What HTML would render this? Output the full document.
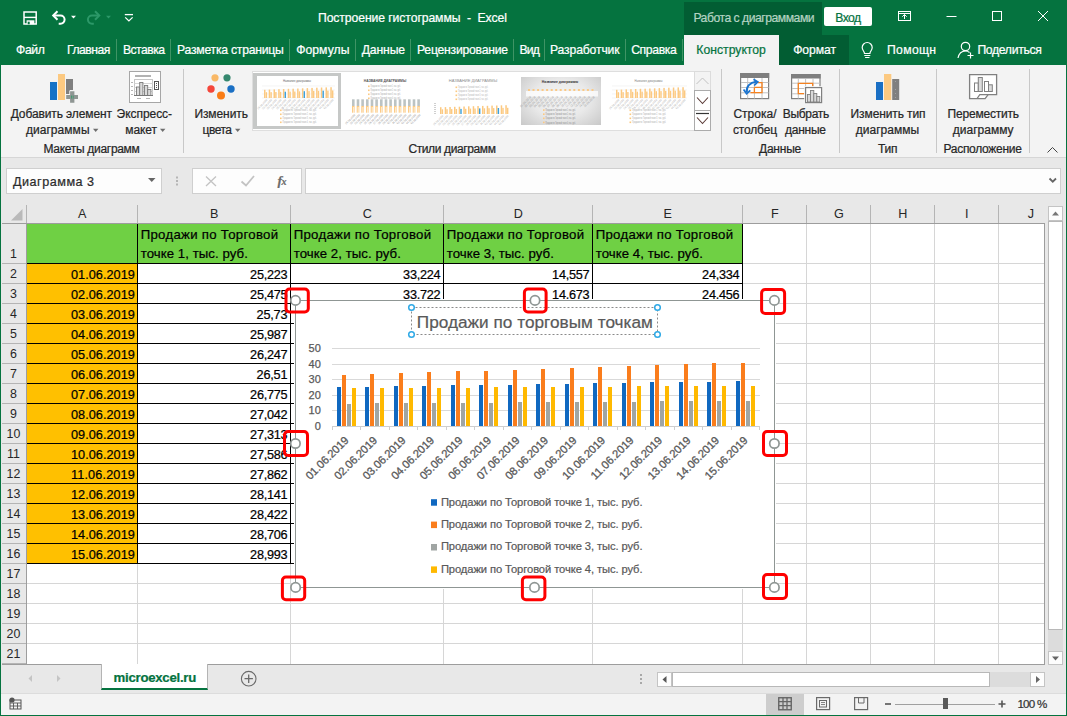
<!DOCTYPE html><html lang="ru"><head><meta charset="utf-8"><title>Построение гистограммы - Excel</title><style>
*{box-sizing:border-box;margin:0;padding:0}
html,body{width:1067px;height:716px;overflow:hidden;background:#fff}
body{font-family:"Liberation Sans",sans-serif;font-size:12px;color:#262626;position:relative}
.a{position:absolute}
.t{position:absolute;white-space:nowrap;line-height:1;-webkit-text-stroke:.22px currentColor}
.w{color:#fff}
svg{position:absolute;overflow:visible}
#title{left:0;top:0;width:1067px;height:65px;background:#05733f}
#ribbon{left:1px;top:65px;width:1065px;height:92px;background:#f3f3f3}
#fbar{left:1px;top:157px;width:1065px;height:47px;background:#e8e8e8;border-top:1px solid #d6d6d6}
.sep{position:absolute;width:1px;background:#c8c8c8}
.tsep{position:absolute;width:1px;background:#3f9465;top:39px;height:22px}
.box{position:absolute;background:#fdfdfd;border:1px solid #cfcfcf}
.gl{position:absolute;background:#d6d6d6}
.bl{position:absolute;background:#000}
</style></head><body>
<div id="title" class="a"></div>
<div class="a" style="left:684px;top:2px;width:138px;height:33px;background:#025d33"></div>
<div class="a" style="left:779px;top:35px;width:70px;height:30px;background:#025d33"></div>
<div class="a" style="left:684px;top:35px;width:95px;height:30px;background:#f3f3f3"></div>
<div class="t " style="left:318px;top:11.7px;font-size:12.2px;letter-spacing:-0.09px;color:#fff;white-space:pre;">Построение гистограммы  -  Excel</div>
<div class="t " style="left:693.4px;top:11.7px;font-size:12.2px;letter-spacing:-0.49px;color:#b4d3c2;">Работа с диаграммами</div>
<div class="a" style="left:824px;top:7px;width:48px;height:19px;background:#fff;border-radius:2px"></div>
<div class="t " style="left:835.2px;top:11.7px;font-size:12.2px;letter-spacing:-0.55px;color:#05733f;">Вход</div>
<div class="t " style="left:16px;top:43.7px;font-size:12.2px;letter-spacing:-0.37px;color:#fff;">Файл</div>
<div class="t " style="left:67px;top:43.7px;font-size:12.2px;letter-spacing:-0.49px;color:#fff;">Главная</div>
<div class="t " style="left:123px;top:43.7px;font-size:12.2px;letter-spacing:-0.55px;color:#fff;">Вставка</div>
<div class="t " style="left:177px;top:43.7px;font-size:12.2px;letter-spacing:-0.23px;color:#fff;">Разметка страницы</div>
<div class="t " style="left:296.2px;top:43.7px;font-size:12.2px;letter-spacing:0.03px;color:#fff;">Формулы</div>
<div class="t " style="left:361.7px;top:43.7px;font-size:12.2px;letter-spacing:-0.13px;color:#fff;">Данные</div>
<div class="t " style="left:417px;top:43.7px;font-size:12.2px;letter-spacing:-0.23px;color:#fff;">Рецензирование</div>
<div class="t " style="left:519.5px;top:43.7px;font-size:12.2px;letter-spacing:-0.79px;color:#fff;">Вид</div>
<div class="t " style="left:550px;top:43.7px;font-size:12.2px;letter-spacing:-0.15px;color:#fff;">Разработчик</div>
<div class="t " style="left:631.2px;top:43.7px;font-size:12.2px;letter-spacing:-0.37px;color:#fff;">Справка</div>
<div class="tsep" style="left:116px"></div>
<div class="tsep" style="left:170px"></div>
<div class="tsep" style="left:289px"></div>
<div class="tsep" style="left:355px"></div>
<div class="tsep" style="left:410px"></div>
<div class="tsep" style="left:513px"></div>
<div class="tsep" style="left:544px"></div>
<div class="tsep" style="left:625px"></div>
<div class="tsep" style="left:682px"></div>
<div class="t " style="left:696.3px;top:43.7px;font-size:12.2px;letter-spacing:0.01px;color:#05733f;">Конструктор</div>
<div class="t " style="left:793.2px;top:43.7px;font-size:12.2px;letter-spacing:-0.09px;color:#fff;">Формат</div>
<div class="t " style="left:887px;top:43.7px;font-size:12.2px;letter-spacing:0.32px;color:#fff;">Помощн</div>
<div class="t " style="left:977.4px;top:43.7px;font-size:12.2px;letter-spacing:-0.32px;color:#fff;">Поделиться</div>
<svg style="left:0;top:0" width="1067" height="65" viewBox="0 0 1067 65" fill="none" stroke="#fff" stroke-width="1.4">
<path d="M24 12h12.2v12h-12.2z" stroke-width="1.5"/><path d="M24 17.4h12.2" stroke-width="1.4"/><rect x="26.6" y="20.3" width="7.8" height="4" fill="#fff" stroke="none"/><rect x="27.7" y="21.7" width="2" height="2.6" fill="#05733f" stroke="none"/>
<path d="M53.5 15.5h7a4.1 4.1 0 0 1 0 8.2h-1.8" stroke-width="2"/><path d="M57.5 11.3l-4.3 4.2 4.3 4.2" stroke-width="2"/>
<path d="M71 15.8l2.5 2.7 2.5-2.7z" fill="#fff" stroke="none"/>
<g stroke="#2c9868"><path d="M99 15.5h-7a4.1 4.1 0 0 0 0 8.2h1.8" stroke-width="2"/><path d="M95 11.3l4.3 4.2-4.3 4.2" stroke-width="2"/><path d="M106 15.8l2.5 2.7 2.5-2.7z" fill="#2c9868" stroke="none"/></g>
<path d="M124.8 14.6h8.2" stroke-width="1.3"/><path d="M125.2 17.4l3.7 3.5 3.7-3.5" stroke-width="1.3"/>
<rect x="898.5" y="11.5" width="12" height="9" stroke-width="1"/><path d="M898.5 13.5h12M904.5 19v-4.5M902.3 16.7l2.2-2.2 2.2 2.2" stroke-width="1"/>
<path d="M946.5 16.5h10" stroke-width="1"/>
<rect x="992.5" y="11.5" width="9" height="9" stroke-width="1"/>
<path d="M1038 11l10 10M1048 11l-10 10" stroke-width="1"/>
<g transform="translate(1.3 0)"><path d="M863 55.5h6M863.8 57.5h4.4M863.2 53.5c0-2.2-2.3-3-2.3-6a5 5 0 0 1 10 0c0 3-2.3 3.8-2.3 6z" stroke-width="1.2"/></g>
<circle cx="965.5" cy="46.5" r="4.2" stroke-width="1.2"/><path d="M958 58c1-5 4-7 7.5-7 1.5 0 3 .5 4 1.5M970.5 52.5v6M967.5 55.5h6" stroke-width="1.2"/>
</svg>
<div id="ribbon" class="a"></div>
<div class="t " style="left:10.7px;top:107.9px;font-size:12px;letter-spacing:-0.11px;color:#262626;">Добавить элемент</div>
<div class="t " style="left:25.9px;top:124.4px;font-size:12px;letter-spacing:0.05px;color:#262626;">диаграммы</div>
<div class="t " style="left:116.6px;top:107.9px;font-size:12px;letter-spacing:-0.05px;color:#262626;">Экспресс-</div>
<div class="t " style="left:125.2px;top:124.4px;font-size:12px;letter-spacing:-0.06px;color:#262626;">макет</div>
<div class="t " style="left:43.5px;top:142.6px;font-size:12px;letter-spacing:-0.3px;color:#262626;">Макеты диаграмм</div>
<div class="t " style="left:194.4px;top:107.9px;font-size:12px;letter-spacing:-0.08px;color:#262626;">Изменить</div>
<div class="t " style="left:202.5px;top:124.4px;font-size:12px;letter-spacing:-0.48px;color:#262626;">цвета</div>
<div class="t " style="left:408.4px;top:142.6px;font-size:12px;letter-spacing:-0.38px;color:#262626;">Стили диаграмм</div>
<div class="t " style="left:733.4px;top:107.9px;font-size:12px;letter-spacing:0.01px;color:#262626;">Строка/</div>
<div class="t " style="left:732.9px;top:124.4px;font-size:12px;letter-spacing:-0.14px;color:#262626;">столбец</div>
<div class="t " style="left:782.7px;top:107.9px;font-size:12px;letter-spacing:-0.29px;color:#262626;">Выбрать</div>
<div class="t " style="left:785px;top:124.4px;font-size:12px;letter-spacing:-0.24px;color:#262626;">данные</div>
<div class="t " style="left:759px;top:142.6px;font-size:12px;letter-spacing:-0.23px;color:#262626;">Данные</div>
<div class="t " style="left:850.6px;top:107.9px;font-size:12px;letter-spacing:-0.11px;color:#262626;">Изменить тип</div>
<div class="t " style="left:855.8px;top:124.4px;font-size:12px;letter-spacing:0.01px;color:#262626;">диаграммы</div>
<div class="t " style="left:878px;top:142.6px;font-size:12px;letter-spacing:-0.2px;color:#262626;">Тип</div>
<div class="t " style="left:947.6px;top:107.9px;font-size:12px;letter-spacing:-0.21px;color:#262626;">Переместить</div>
<div class="t " style="left:952.8px;top:124.4px;font-size:12px;letter-spacing:0.01px;color:#262626;">диаграмму</div>
<div class="t " style="left:943.5px;top:142.6px;font-size:12px;letter-spacing:-0.29px;color:#262626;">Расположение</div>
<div class="sep" style="left:183px;top:69px;height:84px"></div>
<div class="sep" style="left:721px;top:69px;height:84px"></div>
<div class="sep" style="left:839px;top:69px;height:84px"></div>
<div class="sep" style="left:936px;top:69px;height:84px"></div>
<div class="sep" style="left:1029px;top:69px;height:84px"></div>
<svg style="left:0;top:0" width="1067" height="160" viewBox="0 0 1067 160">
<g fill="#6e6e6e"><path d="M93 128.7h5.4l-2.7 3.2z"/><path d="M160 128.7h5.4l-2.7 3.2z"/><path d="M235 128.7h5.4l-2.7 3.2z"/></g>
<path d="M1047.5 152.5l5-5 5 5" fill="none" stroke="#444" stroke-width="1"/>
</svg>
<svg style="left:0;top:0" width="1067" height="160" viewBox="0 0 1067 160">
<!-- add chart element -->
<rect x="50" y="82" width="7" height="18" fill="#1572c6"/><rect x="58" y="74" width="7" height="26" fill="#fcc981"/><path d="M66 79h7v11h-3v4h-4z" fill="#7f7f7f"/>
<path d="M66.2 95h3.9v-3.7h4.3v3.7h3.6v4.1h-3.6v3.7h-4.3v-3.7h-3.9z" fill="#8f9693" stroke="#f3f3f3" stroke-width="1.6" paint-order="stroke"/><g fill="#1f9a63"><rect x="71" y="95.7" width="1" height="1"/><rect x="72.7" y="95.7" width="1" height="1"/><rect x="71" y="97.4" width="1" height="1"/><rect x="72.7" y="97.4" width="1" height="1"/></g>
<!-- express layout -->
<rect x="129.5" y="71.5" width="31" height="31" fill="#fff" stroke="#a6a6a6"/>
<path d="M135 76h16" stroke="#b2b2b2" stroke-width="2"/>
<rect x="134.5" y="79.5" width="18" height="16" fill="none" stroke="#c6c6c6"/><path d="M134.5 83.5h18M134.5 87.5h18M134.5 91.5h18" stroke="#d6d6d6" fill="none"/>
<path d="M131 82.5h2M131 86.5h2M131 90.5h2M131 94.5h2" stroke="#b5b5b5"/>
<g fill="#dadada" stroke="#7a7a7a" stroke-width=".900"><rect x="136.5" y="87" width="3.2" height="8.5"/><rect x="139.7" y="82.5" width="3.2" height="13"/><rect x="144.5" y="85.5" width="3.2" height="10"/><rect x="147.7" y="89.5" width="3.2" height="6"/></g>
<path d="M134 95.5h19" stroke="#777"/>
<rect x="154.5" y="81.5" width="4" height="8" fill="#fff" stroke="#555" stroke-width="1"/><path d="M156 83.5h1M156 85.5h1M156 87.5h1" stroke="#555" stroke-width="1"/>
<path d="M137 98.5h4M146 98.5h4" stroke="#b5b5b5"/>
<!-- change colors -->
<circle cx="215" cy="77.8" r="3.6" fill="#f9b866"/><circle cx="227" cy="77.8" r="3.6" fill="#35876e"/><circle cx="211" cy="89" r="3.7" fill="#f4463a"/><circle cx="231" cy="89" r="3.7" fill="#1a6fc4"/><circle cx="221" cy="95.6" r="4" fill="#fa7d17"/>
<!-- switch row/col -->
<rect x="740.6" y="73.6" width="28" height="25" fill="#fff" stroke="#808080" stroke-width="1.2"/><rect x="740" y="73" width="29.2" height="5" fill="#7f7f7f"/>
<path d="M741 82.5h27.5M741 87.5h27.5M741 92.8h27.5M747.7 78v20.5M754.4 78v20.5M762 78v20.5" stroke="#c2c2c2" fill="none"/>
<path d="M750.5 92.6h11.5v-10h-4M754.4 87.4h7.6M754.4 87.4v5.2" stroke="#f58220" stroke-width="1.3" fill="none"/>
<path d="M746.7 92c-.4-5.5 3-9.5 9.5-10.3" stroke="#1a74d0" stroke-width="2" fill="none"/><path d="M753.5 79.3l4.3 2.6-3.6 3.6M743.6 89.6l3 4.2 3.7-3.4" stroke="#1a74d0" stroke-width="1.7" fill="none"/>
<!-- select data -->
<rect x="791.6" y="74.6" width="28.4" height="24" fill="#fff" stroke="#808080" stroke-width="1.2"/><rect x="791" y="74" width="29.6" height="4.5" fill="#7f7f7f"/>
<path d="M792 83.2h28M792 88.5h28M792 93.8h28M798.3 79v19.5M805.6 79v19.5M813 79v19.5" stroke="#c2c2c2" fill="none"/>
<path d="M812.7 86.5v-3.2h-14.4v10.4h6" stroke="#f58220" stroke-width="1.3" fill="none"/>
<rect x="804.2" y="86.2" width="18.8" height="17.8" fill="#f3f3f3"/>
<rect x="805.6" y="87.6" width="16" height="15" fill="#fff" stroke="#808080" stroke-width="1.2"/>
<g fill="#d9d9d9" stroke="#808080" stroke-width=".900"><rect x="807.5" y="94.5" width="3" height="7.5"/><rect x="810.5" y="90.5" width="3.3" height="11.5"/><rect x="813.8" y="93.5" width="3" height="8.5"/><rect x="816.8" y="96.5" width="3" height="5.5"/></g>
<!-- change type -->
<rect x="876" y="82" width="7" height="18" fill="#1a6fc4"/><rect x="884" y="74" width="7.3" height="26" fill="#fcc981"/><rect x="892.2" y="79" width="7" height="21" fill="#7f7f7f"/>
<!-- move chart -->
<path d="M969.6 74.6h27v20h-8.5l-3 4h-15.5z" fill="#fff" stroke="#808080" stroke-width="1.3"/>
<path d="M977 98.6l2.8-4h8.6" fill="none" stroke="#808080" stroke-width="1.2"/>
<g stroke="#808080" stroke-width="1"><rect x="974.5" y="83" width="3.8" height="8.5" fill="#fff"/><rect x="978.3" y="77.5" width="4" height="14" fill="#dcdcdc"/><rect x="984.5" y="81.5" width="4" height="10" fill="#fff"/><rect x="988.5" y="84.8" width="3.8" height="6.7" fill="#dcdcdc"/></g>
<g fill="#a0a0a0"><rect x="895" y="81" width="1" height="1"/><rect x="895" y="89" width="1" height="1"/><rect x="895" y="93" width="1" height="1"/><rect x="895" y="97" width="1" height="1"/></g>
</svg>
<div class="a" style="left:252px;top:71px;width:459px;height:60px;background:#fff;border:1px solid #dedede"></div>
<div class="a" style="left:253px;top:73px;width:88px;height:56px;border:3px solid #c6c8c7;border-left-width:4px"></div>
<div class="a" style="left:521px;top:77px;width:80px;height:48px;background:radial-gradient(ellipse 70% 80% at 50% 45%,#f6f6f6 0%,#e9e9e9 50%,#c8c8c8 100%)"></div>
<svg style="left:0;top:0" width="1067" height="160" viewBox="0 0 1067 160" fill="none">
<rect x="694.5" y="71.5" width="16" height="19" fill="#f3f3f3" stroke="#dcdcdc"/>
<rect x="694.5" y="90.5" width="16" height="20" fill="#fff" stroke="#ababab"/>
<rect x="694.5" y="110.5" width="16" height="20" fill="#fff" stroke="#ababab"/>
<path d="M696.5 84l6-6 6 6" stroke="#c2c2c2" stroke-width="1"/>
<path d="M697 97.5l5.5 6 5.5-6" stroke="#5a3a36" stroke-width="1.1"/>
<path d="M696 113.5h13" stroke="#333" stroke-width="1.2"/><path d="M697 117.5l5.5 6 5.5-6" stroke="#5a3a36" stroke-width="1.1"/>
</svg>
<svg style="left:0;top:0" width="1067" height="160" viewBox="0 0 1067 160"><text x="297" y="82.3" font-size="2.8" text-anchor="middle" fill="#686868" font-family="Liberation Sans, sans-serif" >Название диаграммы</text><path d="M262 86h73" stroke="#ececec" stroke-width=".600"/><path d="M262 90h73" stroke="#ececec" stroke-width=".600"/><path d="M262 94h73" stroke="#ececec" stroke-width=".600"/><path d="M262 98h73" stroke="#ececec" stroke-width=".600"/><rect x="264" y="89.8" width="1.5" height="8.2" fill="#fcc981"/><rect x="265.7" y="92.2" width="1.4" height="5.8" fill="#fcc981"/><rect x="268.7" y="89.6" width="1.5" height="8.4" fill="#fcc981"/><rect x="270.4" y="92.1" width="1.4" height="5.9" fill="#fcc981"/><rect x="273.5" y="89.4" width="1.5" height="8.6" fill="#fcc981"/><rect x="275.2" y="92" width="1.4" height="6" fill="#fcc981"/><rect x="278.2" y="89.2" width="1.5" height="8.8" fill="#fcc981"/><rect x="279.9" y="91.8" width="1.4" height="6.2" fill="#fcc981"/><rect x="282.9" y="89" width="1.5" height="9" fill="#fcc981"/><rect x="284.6" y="91.7" width="1.4" height="6.3" fill="#3aa0dc"/><rect x="287.7" y="88.8" width="1.5" height="9.2" fill="#fcc981"/><rect x="289.4" y="91.6" width="1.4" height="6.4" fill="#fcc981"/><rect x="292.4" y="88.7" width="1.5" height="9.3" fill="#fcc981"/><rect x="294.1" y="91.5" width="1.4" height="6.5" fill="#fcc981"/><rect x="297.1" y="88.5" width="1.5" height="9.5" fill="#fcc981"/><rect x="298.8" y="91.3" width="1.4" height="6.7" fill="#fcc981"/><rect x="301.9" y="88.3" width="1.5" height="9.7" fill="#fcc981"/><rect x="303.6" y="91.2" width="1.4" height="6.8" fill="#3aa0dc"/><rect x="306.6" y="88.1" width="1.5" height="9.9" fill="#fcc981"/><rect x="308.3" y="91.1" width="1.4" height="6.9" fill="#fcc981"/><rect x="311.3" y="87.9" width="1.5" height="10.1" fill="#fcc981"/><rect x="313" y="90.9" width="1.4" height="7.1" fill="#fcc981"/><rect x="316.1" y="87.7" width="1.5" height="10.3" fill="#fcc981"/><rect x="317.8" y="90.8" width="1.4" height="7.2" fill="#fcc981"/><rect x="320.8" y="87.5" width="1.5" height="10.4" fill="#fcc981"/><rect x="322.5" y="90.7" width="1.4" height="7.3" fill="#3aa0dc"/><rect x="325.5" y="87.4" width="1.5" height="10.6" fill="#fcc981"/><rect x="327.2" y="90.6" width="1.4" height="7.4" fill="#fcc981"/><rect x="330.3" y="87.2" width="1.5" height="10.8" fill="#fcc981"/><rect x="332" y="90.4" width="1.4" height="7.6" fill="#fcc981"/><text transform="translate(267.6 100.3) rotate(-45)" font-size="2.6" text-anchor="end" fill="#9a9a9a" font-family="Liberation Sans, sans-serif">01.06.2019</text><text transform="translate(272.3 100.3) rotate(-45)" font-size="2.6" text-anchor="end" fill="#9a9a9a" font-family="Liberation Sans, sans-serif">02.06.2019</text><text transform="translate(277 100.3) rotate(-45)" font-size="2.6" text-anchor="end" fill="#9a9a9a" font-family="Liberation Sans, sans-serif">03.06.2019</text><text transform="translate(281.8 100.3) rotate(-45)" font-size="2.6" text-anchor="end" fill="#9a9a9a" font-family="Liberation Sans, sans-serif">04.06.2019</text><text transform="translate(286.5 100.3) rotate(-45)" font-size="2.6" text-anchor="end" fill="#9a9a9a" font-family="Liberation Sans, sans-serif">05.06.2019</text><text transform="translate(291.2 100.3) rotate(-45)" font-size="2.6" text-anchor="end" fill="#9a9a9a" font-family="Liberation Sans, sans-serif">06.06.2019</text><text transform="translate(295.9 100.3) rotate(-45)" font-size="2.6" text-anchor="end" fill="#9a9a9a" font-family="Liberation Sans, sans-serif">07.06.2019</text><text transform="translate(300.7 100.3) rotate(-45)" font-size="2.6" text-anchor="end" fill="#9a9a9a" font-family="Liberation Sans, sans-serif">08.06.2019</text><text transform="translate(305.4 100.3) rotate(-45)" font-size="2.6" text-anchor="end" fill="#9a9a9a" font-family="Liberation Sans, sans-serif">09.06.2019</text><text transform="translate(310.2 100.3) rotate(-45)" font-size="2.6" text-anchor="end" fill="#9a9a9a" font-family="Liberation Sans, sans-serif">10.06.2019</text><text transform="translate(314.9 100.3) rotate(-45)" font-size="2.6" text-anchor="end" fill="#9a9a9a" font-family="Liberation Sans, sans-serif">11.06.2019</text><text transform="translate(319.6 100.3) rotate(-45)" font-size="2.6" text-anchor="end" fill="#9a9a9a" font-family="Liberation Sans, sans-serif">12.06.2019</text><text transform="translate(324.4 100.3) rotate(-45)" font-size="2.6" text-anchor="end" fill="#9a9a9a" font-family="Liberation Sans, sans-serif">13.06.2019</text><text transform="translate(329.1 100.3) rotate(-45)" font-size="2.6" text-anchor="end" fill="#9a9a9a" font-family="Liberation Sans, sans-serif">14.06.2019</text><text transform="translate(333.8 100.3) rotate(-45)" font-size="2.6" text-anchor="end" fill="#9a9a9a" font-family="Liberation Sans, sans-serif">15.06.2019</text><rect x="280" y="109.5" width="1.6" height="1.6" fill="#fcc981"/><text x="282.6" y="111.4" font-size="2.7" fill="#a9a9a9" font-family="Liberation Sans, sans-serif" textLength="34" lengthAdjust="spacingAndGlyphs">Продажи по Торговой точке 1, тыс. руб.</text><rect x="280" y="113.5" width="1.6" height="1.6" fill="#fcc981"/><text x="282.6" y="115.4" font-size="2.7" fill="#a9a9a9" font-family="Liberation Sans, sans-serif" textLength="34" lengthAdjust="spacingAndGlyphs">Продажи по Торговой точке 2, тыс. руб.</text><rect x="280" y="117.5" width="1.6" height="1.6" fill="#fcc981"/><text x="282.6" y="119.4" font-size="2.7" fill="#a9a9a9" font-family="Liberation Sans, sans-serif" textLength="34" lengthAdjust="spacingAndGlyphs">Продажи по Торговой точке 3, тыс. руб.</text><rect x="280" y="121.5" width="1.6" height="1.6" fill="#fcc981"/><text x="282.6" y="123.4" font-size="2.7" fill="#a9a9a9" font-family="Liberation Sans, sans-serif" textLength="34" lengthAdjust="spacingAndGlyphs">Продажи по Торговой точке 4, тыс. руб.</text><text x="385" y="81.5" font-size="3.4" text-anchor="middle" fill="#555" font-family="Liberation Sans, sans-serif" font-weight='bold'>НАЗВАНИЕ ДИАГРАММЫ</text><rect x="368" y="85.5" width="1.6" height="1.6" fill="#fcc981"/><text x="370.6" y="87.4" font-size="2.7" fill="#a5a5a5" font-family="Liberation Sans, sans-serif" textLength="30" lengthAdjust="spacingAndGlyphs">Продажи по Торговой точке 1, тыс. руб.</text><rect x="368" y="89.5" width="1.6" height="1.6" fill="#fcc981"/><text x="370.6" y="91.4" font-size="2.7" fill="#a5a5a5" font-family="Liberation Sans, sans-serif" textLength="30" lengthAdjust="spacingAndGlyphs">Продажи по Торговой точке 2, тыс. руб.</text><rect x="368" y="93.5" width="1.6" height="1.6" fill="#fcc981"/><text x="370.6" y="95.4" font-size="2.7" fill="#a5a5a5" font-family="Liberation Sans, sans-serif" textLength="30" lengthAdjust="spacingAndGlyphs">Продажи по Торговой точке 3, тыс. руб.</text><rect x="368" y="97.5" width="1.6" height="1.6" fill="#fcc981"/><text x="370.6" y="99.4" font-size="2.7" fill="#a5a5a5" font-family="Liberation Sans, sans-serif" textLength="30" lengthAdjust="spacingAndGlyphs">Продажи по Торговой точке 4, тыс. руб.</text><rect x="352" y="99.3" width="2.6" height="6.7" fill="#bcc3c3"/><rect x="352" y="106" width="2.6" height="6.7" fill="#fcc981"/><rect x="352.9" y="107" width="1.2" height="6" fill="#fff" opacity=".600"/><rect x="356.7" y="99.3" width="2.6" height="6.7" fill="#bcc3c3"/><rect x="356.7" y="106" width="2.6" height="6.7" fill="#fcc981"/><rect x="357.6" y="107" width="1.2" height="6" fill="#fff" opacity=".600"/><rect x="361.3" y="99.3" width="2.6" height="6.7" fill="#bcc3c3"/><rect x="361.3" y="106" width="2.6" height="6.7" fill="#fcc981"/><rect x="362.3" y="107" width="1.2" height="6" fill="#fff" opacity=".600"/><rect x="366" y="99.3" width="2.6" height="6.7" fill="#bcc3c3"/><rect x="366" y="106" width="2.6" height="6.7" fill="#fcc981"/><rect x="366.9" y="107" width="1.2" height="6" fill="#fff" opacity=".600"/><rect x="370.7" y="99.3" width="2.6" height="6.7" fill="#bcc3c3"/><rect x="370.7" y="106" width="2.6" height="6.7" fill="#fcc981"/><rect x="371.6" y="107" width="1.2" height="6" fill="#fff" opacity=".600"/><rect x="375.3" y="99.3" width="2.6" height="6.7" fill="#bcc3c3"/><rect x="375.3" y="106" width="2.6" height="6.7" fill="#fcc981"/><rect x="376.3" y="107" width="1.2" height="6" fill="#fff" opacity=".600"/><rect x="380" y="99.3" width="2.6" height="6.7" fill="#bcc3c3"/><rect x="380" y="106" width="2.6" height="6.7" fill="#fcc981"/><rect x="380.9" y="107" width="1.2" height="6" fill="#fff" opacity=".600"/><rect x="384.7" y="99.3" width="2.6" height="6.7" fill="#bcc3c3"/><rect x="384.7" y="106" width="2.6" height="6.7" fill="#fcc981"/><rect x="385.6" y="107" width="1.2" height="6" fill="#fff" opacity=".600"/><rect x="389.3" y="99.3" width="2.6" height="6.7" fill="#bcc3c3"/><rect x="389.3" y="106" width="2.6" height="6.7" fill="#fcc981"/><rect x="390.3" y="107" width="1.2" height="6" fill="#fff" opacity=".600"/><rect x="394" y="99.3" width="2.6" height="6.7" fill="#bcc3c3"/><rect x="394" y="106" width="2.6" height="6.7" fill="#fcc981"/><rect x="394.9" y="107" width="1.2" height="6" fill="#fff" opacity=".600"/><rect x="398.7" y="99.3" width="2.6" height="6.7" fill="#bcc3c3"/><rect x="398.7" y="106" width="2.6" height="6.7" fill="#fcc981"/><rect x="399.6" y="107" width="1.2" height="6" fill="#fff" opacity=".600"/><rect x="403.3" y="99.3" width="2.6" height="6.7" fill="#bcc3c3"/><rect x="403.3" y="106" width="2.6" height="6.7" fill="#fcc981"/><rect x="404.3" y="107" width="1.2" height="6" fill="#fff" opacity=".600"/><rect x="408" y="99.3" width="2.6" height="6.7" fill="#bcc3c3"/><rect x="408" y="106" width="2.6" height="6.7" fill="#fcc981"/><rect x="408.9" y="107" width="1.2" height="6" fill="#fff" opacity=".600"/><rect x="412.7" y="99.3" width="2.6" height="6.7" fill="#bcc3c3"/><rect x="412.7" y="106" width="2.6" height="6.7" fill="#fcc981"/><rect x="413.6" y="107" width="1.2" height="6" fill="#fff" opacity=".600"/><rect x="417.3" y="99.3" width="2.6" height="6.7" fill="#bcc3c3"/><rect x="417.3" y="106" width="2.6" height="6.7" fill="#fcc981"/><rect x="418.3" y="107" width="1.2" height="6" fill="#fff" opacity=".600"/><text transform="translate(355.5 115.3) rotate(-45)" font-size="2.6" text-anchor="end" fill="#777" font-family="Liberation Sans, sans-serif">01.06.2019</text><text transform="translate(360.2 115.3) rotate(-45)" font-size="2.6" text-anchor="end" fill="#777" font-family="Liberation Sans, sans-serif">02.06.2019</text><text transform="translate(364.8 115.3) rotate(-45)" font-size="2.6" text-anchor="end" fill="#777" font-family="Liberation Sans, sans-serif">03.06.2019</text><text transform="translate(369.5 115.3) rotate(-45)" font-size="2.6" text-anchor="end" fill="#777" font-family="Liberation Sans, sans-serif">04.06.2019</text><text transform="translate(374.2 115.3) rotate(-45)" font-size="2.6" text-anchor="end" fill="#777" font-family="Liberation Sans, sans-serif">05.06.2019</text><text transform="translate(378.8 115.3) rotate(-45)" font-size="2.6" text-anchor="end" fill="#777" font-family="Liberation Sans, sans-serif">06.06.2019</text><text transform="translate(383.5 115.3) rotate(-45)" font-size="2.6" text-anchor="end" fill="#777" font-family="Liberation Sans, sans-serif">07.06.2019</text><text transform="translate(388.2 115.3) rotate(-45)" font-size="2.6" text-anchor="end" fill="#777" font-family="Liberation Sans, sans-serif">08.06.2019</text><text transform="translate(392.8 115.3) rotate(-45)" font-size="2.6" text-anchor="end" fill="#777" font-family="Liberation Sans, sans-serif">09.06.2019</text><text transform="translate(397.5 115.3) rotate(-45)" font-size="2.6" text-anchor="end" fill="#777" font-family="Liberation Sans, sans-serif">10.06.2019</text><text transform="translate(402.2 115.3) rotate(-45)" font-size="2.6" text-anchor="end" fill="#777" font-family="Liberation Sans, sans-serif">11.06.2019</text><text transform="translate(406.8 115.3) rotate(-45)" font-size="2.6" text-anchor="end" fill="#777" font-family="Liberation Sans, sans-serif">12.06.2019</text><text transform="translate(411.5 115.3) rotate(-45)" font-size="2.6" text-anchor="end" fill="#777" font-family="Liberation Sans, sans-serif">13.06.2019</text><text transform="translate(416.2 115.3) rotate(-45)" font-size="2.6" text-anchor="end" fill="#777" font-family="Liberation Sans, sans-serif">14.06.2019</text><text transform="translate(420.8 115.3) rotate(-45)" font-size="2.6" text-anchor="end" fill="#777" font-family="Liberation Sans, sans-serif">15.06.2019</text><text x="473" y="82.3" font-size="4" text-anchor="middle" fill="#8c8c8c" font-family="Liberation Sans, sans-serif" >НАЗВАНИЕ ДИАГРАММЫ</text><rect x="455.5" y="86.5" width="1.6" height="1.6" fill="#fcc981"/><text x="458.1" y="88.4" font-size="2.7" fill="#b0b0b0" font-family="Liberation Sans, sans-serif" textLength="30" lengthAdjust="spacingAndGlyphs">Продажи по Торговой точке 1, тыс. руб.</text><rect x="455.5" y="90.5" width="1.6" height="1.6" fill="#fcc981"/><text x="458.1" y="92.4" font-size="2.7" fill="#b0b0b0" font-family="Liberation Sans, sans-serif" textLength="30" lengthAdjust="spacingAndGlyphs">Продажи по Торговой точке 2, тыс. руб.</text><rect x="455.5" y="94.5" width="1.6" height="1.6" fill="#fcc981"/><text x="458.1" y="96.4" font-size="2.7" fill="#b0b0b0" font-family="Liberation Sans, sans-serif" textLength="30" lengthAdjust="spacingAndGlyphs">Продажи по Торговой точке 3, тыс. руб.</text><rect x="455.5" y="98.5" width="1.6" height="1.6" fill="#fcc981"/><text x="458.1" y="100.4" font-size="2.7" fill="#b0b0b0" font-family="Liberation Sans, sans-serif" textLength="30" lengthAdjust="spacingAndGlyphs">Продажи по Торговой точке 4, тыс. руб.</text><rect x="440" y="107.2" width="1.5" height="6.8" fill="#fcc981"/><rect x="441.7" y="109.3" width="1.4" height="4.7" fill="#fcc981"/><rect x="444.7" y="107.1" width="1.5" height="6.9" fill="#fcc981"/><rect x="446.3" y="109.2" width="1.4" height="4.8" fill="#fcc981"/><rect x="449.3" y="107" width="1.5" height="7" fill="#fcc981"/><rect x="451" y="109.1" width="1.4" height="4.9" fill="#fcc981"/><rect x="454" y="106.8" width="1.5" height="7.2" fill="#fcc981"/><rect x="455.7" y="109" width="1.4" height="5" fill="#fcc981"/><rect x="458.7" y="106.7" width="1.5" height="7.3" fill="#fcc981"/><rect x="460.3" y="108.9" width="1.4" height="5.1" fill="#3aa0dc"/><rect x="463.3" y="106.5" width="1.5" height="7.5" fill="#fcc981"/><rect x="465" y="108.8" width="1.4" height="5.2" fill="#fcc981"/><rect x="468" y="106.3" width="1.5" height="7.6" fill="#fcc981"/><rect x="469.7" y="108.6" width="1.4" height="5.4" fill="#fcc981"/><rect x="472.7" y="106.2" width="1.5" height="7.8" fill="#fcc981"/><rect x="474.3" y="108.5" width="1.4" height="5.5" fill="#fcc981"/><rect x="477.3" y="106" width="1.5" height="7.9" fill="#fcc981"/><rect x="479" y="108.4" width="1.4" height="5.6" fill="#3aa0dc"/><rect x="482" y="105.9" width="1.5" height="8.1" fill="#fcc981"/><rect x="483.7" y="108.3" width="1.4" height="5.7" fill="#fcc981"/><rect x="486.7" y="105.8" width="1.5" height="8.2" fill="#fcc981"/><rect x="488.3" y="108.2" width="1.4" height="5.8" fill="#fcc981"/><rect x="491.3" y="105.6" width="1.5" height="8.4" fill="#fcc981"/><rect x="493" y="108.1" width="1.4" height="5.9" fill="#fcc981"/><rect x="496" y="105.5" width="1.5" height="8.5" fill="#fcc981"/><rect x="497.7" y="108" width="1.4" height="6" fill="#3aa0dc"/><rect x="500.7" y="105.3" width="1.5" height="8.7" fill="#fcc981"/><rect x="502.3" y="107.9" width="1.4" height="6.1" fill="#fcc981"/><rect x="505.3" y="105.2" width="1.5" height="8.9" fill="#fcc981"/><rect x="507" y="107.8" width="1.4" height="6.2" fill="#fcc981"/><text transform="translate(443.5 116.3) rotate(-45)" font-size="2.6" text-anchor="end" fill="#9a9a9a" font-family="Liberation Sans, sans-serif">01.06.2019</text><text transform="translate(448.2 116.3) rotate(-45)" font-size="2.6" text-anchor="end" fill="#9a9a9a" font-family="Liberation Sans, sans-serif">02.06.2019</text><text transform="translate(452.8 116.3) rotate(-45)" font-size="2.6" text-anchor="end" fill="#9a9a9a" font-family="Liberation Sans, sans-serif">03.06.2019</text><text transform="translate(457.5 116.3) rotate(-45)" font-size="2.6" text-anchor="end" fill="#9a9a9a" font-family="Liberation Sans, sans-serif">04.06.2019</text><text transform="translate(462.2 116.3) rotate(-45)" font-size="2.6" text-anchor="end" fill="#9a9a9a" font-family="Liberation Sans, sans-serif">05.06.2019</text><text transform="translate(466.8 116.3) rotate(-45)" font-size="2.6" text-anchor="end" fill="#9a9a9a" font-family="Liberation Sans, sans-serif">06.06.2019</text><text transform="translate(471.5 116.3) rotate(-45)" font-size="2.6" text-anchor="end" fill="#9a9a9a" font-family="Liberation Sans, sans-serif">07.06.2019</text><text transform="translate(476.2 116.3) rotate(-45)" font-size="2.6" text-anchor="end" fill="#9a9a9a" font-family="Liberation Sans, sans-serif">08.06.2019</text><text transform="translate(480.8 116.3) rotate(-45)" font-size="2.6" text-anchor="end" fill="#9a9a9a" font-family="Liberation Sans, sans-serif">09.06.2019</text><text transform="translate(485.5 116.3) rotate(-45)" font-size="2.6" text-anchor="end" fill="#9a9a9a" font-family="Liberation Sans, sans-serif">10.06.2019</text><text transform="translate(490.2 116.3) rotate(-45)" font-size="2.6" text-anchor="end" fill="#9a9a9a" font-family="Liberation Sans, sans-serif">11.06.2019</text><text transform="translate(494.8 116.3) rotate(-45)" font-size="2.6" text-anchor="end" fill="#9a9a9a" font-family="Liberation Sans, sans-serif">12.06.2019</text><text transform="translate(499.5 116.3) rotate(-45)" font-size="2.6" text-anchor="end" fill="#9a9a9a" font-family="Liberation Sans, sans-serif">13.06.2019</text><text transform="translate(504.2 116.3) rotate(-45)" font-size="2.6" text-anchor="end" fill="#9a9a9a" font-family="Liberation Sans, sans-serif">14.06.2019</text><text transform="translate(508.8 116.3) rotate(-45)" font-size="2.6" text-anchor="end" fill="#9a9a9a" font-family="Liberation Sans, sans-serif">15.06.2019</text><path d="M435 103v11" stroke="#888" stroke-width=".800" stroke-dasharray="1 1"/><text x="560" y="82.5" font-size="3.4" text-anchor="middle" fill="#333" font-family="Liberation Sans, sans-serif" font-weight='bold'>Название диаграммы</text><rect x="526" y="91" width="72" height="5.5" fill="#fff" opacity=".750"/><rect x="528" y="89" width="2" height="2" fill="#fbc986"/><text transform="translate(531.4 97.3) rotate(-45)" font-size="2.9" text-anchor="end" fill="#9a9a9a" font-family="Liberation Sans, sans-serif">01.06.2019</text><rect x="532.5" y="89" width="2" height="2" fill="#fbc986"/><text transform="translate(535.9 97.3) rotate(-45)" font-size="2.9" text-anchor="end" fill="#9a9a9a" font-family="Liberation Sans, sans-serif">02.06.2019</text><rect x="537.1" y="89" width="2" height="2" fill="#fbc986"/><text transform="translate(540.5 97.3) rotate(-45)" font-size="2.9" text-anchor="end" fill="#9a9a9a" font-family="Liberation Sans, sans-serif">03.06.2019</text><rect x="541.6" y="89" width="2" height="2" fill="#fbc986"/><text transform="translate(545 97.3) rotate(-45)" font-size="2.9" text-anchor="end" fill="#9a9a9a" font-family="Liberation Sans, sans-serif">04.06.2019</text><rect x="546.1" y="89" width="2" height="2" fill="#fbc986"/><text transform="translate(549.5 97.3) rotate(-45)" font-size="2.9" text-anchor="end" fill="#9a9a9a" font-family="Liberation Sans, sans-serif">05.06.2019</text><rect x="550.7" y="89" width="2" height="2" fill="#fbc986"/><text transform="translate(554.1 97.3) rotate(-45)" font-size="2.9" text-anchor="end" fill="#9a9a9a" font-family="Liberation Sans, sans-serif">06.06.2019</text><rect x="555.2" y="89" width="2" height="2" fill="#fbc986"/><text transform="translate(558.6 97.3) rotate(-45)" font-size="2.9" text-anchor="end" fill="#9a9a9a" font-family="Liberation Sans, sans-serif">07.06.2019</text><rect x="559.7" y="89" width="2" height="2" fill="#fbc986"/><text transform="translate(563.1 97.3) rotate(-45)" font-size="2.9" text-anchor="end" fill="#9a9a9a" font-family="Liberation Sans, sans-serif">08.06.2019</text><rect x="564.3" y="89" width="2" height="2" fill="#fbc986"/><text transform="translate(567.7 97.3) rotate(-45)" font-size="2.9" text-anchor="end" fill="#9a9a9a" font-family="Liberation Sans, sans-serif">09.06.2019</text><rect x="568.8" y="89" width="2" height="2" fill="#fbc986"/><text transform="translate(572.2 97.3) rotate(-45)" font-size="2.9" text-anchor="end" fill="#9a9a9a" font-family="Liberation Sans, sans-serif">10.06.2019</text><rect x="573.3" y="89" width="2" height="2" fill="#fbc986"/><text transform="translate(576.7 97.3) rotate(-45)" font-size="2.9" text-anchor="end" fill="#9a9a9a" font-family="Liberation Sans, sans-serif">11.06.2019</text><rect x="577.9" y="89" width="2" height="2" fill="#fbc986"/><text transform="translate(581.3 97.3) rotate(-45)" font-size="2.9" text-anchor="end" fill="#9a9a9a" font-family="Liberation Sans, sans-serif">12.06.2019</text><rect x="582.4" y="89" width="2" height="2" fill="#fbc986"/><text transform="translate(585.8 97.3) rotate(-45)" font-size="2.9" text-anchor="end" fill="#9a9a9a" font-family="Liberation Sans, sans-serif">13.06.2019</text><rect x="586.9" y="89" width="2" height="2" fill="#fbc986"/><text transform="translate(590.3 97.3) rotate(-45)" font-size="2.9" text-anchor="end" fill="#9a9a9a" font-family="Liberation Sans, sans-serif">14.06.2019</text><rect x="591.5" y="89" width="2" height="2" fill="#fbc986"/><text transform="translate(594.9 97.3) rotate(-45)" font-size="2.9" text-anchor="end" fill="#9a9a9a" font-family="Liberation Sans, sans-serif">15.06.2019</text><rect x="543" y="109.3" width="1.6" height="1.6" fill="#fcc981"/><text x="545.6" y="111.2" font-size="2.7" fill="#8a8a8a" font-family="Liberation Sans, sans-serif" textLength="30" lengthAdjust="spacingAndGlyphs">Продажи по Торговой точке 1, тыс. руб.</text><rect x="543" y="113.4" width="1.6" height="1.6" fill="#fcc981"/><text x="545.6" y="115.3" font-size="2.7" fill="#8a8a8a" font-family="Liberation Sans, sans-serif" textLength="30" lengthAdjust="spacingAndGlyphs">Продажи по Торговой точке 2, тыс. руб.</text><rect x="543" y="117.5" width="1.6" height="1.6" fill="#fcc981"/><text x="545.6" y="119.4" font-size="2.7" fill="#8a8a8a" font-family="Liberation Sans, sans-serif" textLength="30" lengthAdjust="spacingAndGlyphs">Продажи по Торговой точке 3, тыс. руб.</text><rect x="543" y="121.6" width="1.6" height="1.6" fill="#fcc981"/><text x="545.6" y="123.5" font-size="2.7" fill="#8a8a8a" font-family="Liberation Sans, sans-serif" textLength="30" lengthAdjust="spacingAndGlyphs">Продажи по Торговой точке 4, тыс. руб.</text><text x="648.5" y="81.5" font-size="2.8" text-anchor="middle" fill="#808080" font-family="Liberation Sans, sans-serif" >Название диаграммы</text><path d="M612 86h75" stroke="#ececec" stroke-width=".600"/><path d="M612 90h75" stroke="#ececec" stroke-width=".600"/><path d="M612 94h75" stroke="#ececec" stroke-width=".600"/><path d="M612 98h75" stroke="#ececec" stroke-width=".600"/><rect x="616" y="89.8" width="1.5" height="8.2" fill="#fcc981"/><rect x="617.7" y="92.2" width="1.4" height="5.8" fill="#fcc981"/><rect x="620.7" y="89.6" width="1.5" height="8.4" fill="#fcc981"/><rect x="622.4" y="92.1" width="1.4" height="5.9" fill="#fcc981"/><rect x="625.5" y="89.4" width="1.5" height="8.6" fill="#fcc981"/><rect x="627.2" y="92" width="1.4" height="6" fill="#fcc981"/><rect x="630.2" y="89.2" width="1.5" height="8.8" fill="#fcc981"/><rect x="631.9" y="91.8" width="1.4" height="6.2" fill="#fcc981"/><rect x="634.9" y="89" width="1.5" height="9" fill="#fcc981"/><rect x="636.6" y="91.7" width="1.4" height="6.3" fill="#fcc981"/><rect x="639.7" y="88.8" width="1.5" height="9.2" fill="#fcc981"/><rect x="641.4" y="91.6" width="1.4" height="6.4" fill="#fcc981"/><rect x="644.4" y="88.7" width="1.5" height="9.3" fill="#fcc981"/><rect x="646.1" y="91.5" width="1.4" height="6.5" fill="#fcc981"/><rect x="649.1" y="88.5" width="1.5" height="9.5" fill="#fcc981"/><rect x="650.8" y="91.3" width="1.4" height="6.7" fill="#fcc981"/><rect x="653.9" y="88.3" width="1.5" height="9.7" fill="#fcc981"/><rect x="655.6" y="91.2" width="1.4" height="6.8" fill="#fcc981"/><rect x="658.6" y="88.1" width="1.5" height="9.9" fill="#fcc981"/><rect x="660.3" y="91.1" width="1.4" height="6.9" fill="#fcc981"/><rect x="663.3" y="87.9" width="1.5" height="10.1" fill="#fcc981"/><rect x="665" y="90.9" width="1.4" height="7.1" fill="#fcc981"/><rect x="668.1" y="87.7" width="1.5" height="10.3" fill="#fcc981"/><rect x="669.8" y="90.8" width="1.4" height="7.2" fill="#fcc981"/><rect x="672.8" y="87.5" width="1.5" height="10.4" fill="#fcc981"/><rect x="674.5" y="90.7" width="1.4" height="7.3" fill="#fcc981"/><rect x="677.5" y="87.4" width="1.5" height="10.6" fill="#fcc981"/><rect x="679.2" y="90.6" width="1.4" height="7.4" fill="#fcc981"/><rect x="682.3" y="87.2" width="1.5" height="10.8" fill="#fcc981"/><rect x="684" y="90.4" width="1.4" height="7.6" fill="#fcc981"/><text transform="translate(619.5 100.3) rotate(-45)" font-size="2.6" text-anchor="end" fill="#9a9a9a" font-family="Liberation Sans, sans-serif">01.06.2019</text><text transform="translate(624.3 100.3) rotate(-45)" font-size="2.6" text-anchor="end" fill="#9a9a9a" font-family="Liberation Sans, sans-serif">02.06.2019</text><text transform="translate(629 100.3) rotate(-45)" font-size="2.6" text-anchor="end" fill="#9a9a9a" font-family="Liberation Sans, sans-serif">03.06.2019</text><text transform="translate(633.8 100.3) rotate(-45)" font-size="2.6" text-anchor="end" fill="#9a9a9a" font-family="Liberation Sans, sans-serif">04.06.2019</text><text transform="translate(638.5 100.3) rotate(-45)" font-size="2.6" text-anchor="end" fill="#9a9a9a" font-family="Liberation Sans, sans-serif">05.06.2019</text><text transform="translate(643.2 100.3) rotate(-45)" font-size="2.6" text-anchor="end" fill="#9a9a9a" font-family="Liberation Sans, sans-serif">06.06.2019</text><text transform="translate(647.9 100.3) rotate(-45)" font-size="2.6" text-anchor="end" fill="#9a9a9a" font-family="Liberation Sans, sans-serif">07.06.2019</text><text transform="translate(652.7 100.3) rotate(-45)" font-size="2.6" text-anchor="end" fill="#9a9a9a" font-family="Liberation Sans, sans-serif">08.06.2019</text><text transform="translate(657.4 100.3) rotate(-45)" font-size="2.6" text-anchor="end" fill="#9a9a9a" font-family="Liberation Sans, sans-serif">09.06.2019</text><text transform="translate(662.1 100.3) rotate(-45)" font-size="2.6" text-anchor="end" fill="#9a9a9a" font-family="Liberation Sans, sans-serif">10.06.2019</text><text transform="translate(666.9 100.3) rotate(-45)" font-size="2.6" text-anchor="end" fill="#9a9a9a" font-family="Liberation Sans, sans-serif">11.06.2019</text><text transform="translate(671.6 100.3) rotate(-45)" font-size="2.6" text-anchor="end" fill="#9a9a9a" font-family="Liberation Sans, sans-serif">12.06.2019</text><text transform="translate(676.3 100.3) rotate(-45)" font-size="2.6" text-anchor="end" fill="#9a9a9a" font-family="Liberation Sans, sans-serif">13.06.2019</text><text transform="translate(681.1 100.3) rotate(-45)" font-size="2.6" text-anchor="end" fill="#9a9a9a" font-family="Liberation Sans, sans-serif">14.06.2019</text><text transform="translate(685.8 100.3) rotate(-45)" font-size="2.6" text-anchor="end" fill="#9a9a9a" font-family="Liberation Sans, sans-serif">15.06.2019</text><rect x="629.5" y="109.5" width="1.6" height="1.6" fill="#fcc981"/><text x="632.1" y="111.4" font-size="2.7" fill="#a9a9a9" font-family="Liberation Sans, sans-serif" textLength="34" lengthAdjust="spacingAndGlyphs">Продажи по Торговой точке 1, тыс. руб.</text><rect x="629.5" y="113.5" width="1.6" height="1.6" fill="#fcc981"/><text x="632.1" y="115.4" font-size="2.7" fill="#a9a9a9" font-family="Liberation Sans, sans-serif" textLength="34" lengthAdjust="spacingAndGlyphs">Продажи по Торговой точке 2, тыс. руб.</text><rect x="629.5" y="117.5" width="1.6" height="1.6" fill="#fcc981"/><text x="632.1" y="119.4" font-size="2.7" fill="#a9a9a9" font-family="Liberation Sans, sans-serif" textLength="34" lengthAdjust="spacingAndGlyphs">Продажи по Торговой точке 3, тыс. руб.</text><rect x="629.5" y="121.5" width="1.6" height="1.6" fill="#fcc981"/><text x="632.1" y="123.4" font-size="2.7" fill="#a9a9a9" font-family="Liberation Sans, sans-serif" textLength="34" lengthAdjust="spacingAndGlyphs">Продажи по Торговой точке 4, тыс. руб.</text></svg>
<div id="fbar" class="a"></div>
<div class="box" style="left:6px;top:168px;width:156px;height:26px"></div>
<div class="t " style="left:13px;top:175.8px;font-size:12.6px;letter-spacing:0.51px;color:#2b2b2b;">Диаграмма 3</div>
<div class="box" style="left:192px;top:168px;width:110px;height:26px"></div>
<div class="box" style="left:305px;top:168px;width:756px;height:26px"></div>
<svg style="left:0;top:160px" width="1067" height="50" viewBox="0 160 1067 50" fill="none">
<path d="M148 178h7.5l-3.75 4z" fill="#666"/>
<g fill="#b5b5b5"><rect x="176" y="176.5" width="2" height="2"/><rect x="176" y="180" width="2" height="2"/><rect x="176" y="183.5" width="2" height="2"/></g>
<path d="M206 176.5l10 9.5M216 176.5l-10 9.5" stroke="#c3c3c3" stroke-width="1.3"/>
<path d="M241.5 181.5l4.5 4 8-9.5" stroke="#c3c3c3" stroke-width="1.8"/>
<path d="M1049.5 178.5l3.25 3.2 3.25-3.2" stroke="#666" stroke-width="1.8"/>
</svg>
<div class="t" style="left:277.5px;top:173.5px;font-size:13.5px;font-weight:bold;font-family:'Liberation Serif',serif;font-style:italic;color:#6b6b6b;letter-spacing:-.5px">f<span style="font-size:10px">x</span></div>
<div class="a" style="left:1px;top:204px;width:1065px;height:20px;background:#e8e8e8"></div>
<div class="a" style="left:1px;top:224px;width:25px;height:441px;background:#e8e8e8"></div>
<div class="a" style="left:26px;top:224px;width:1019px;height:441px;background:#fff"></div>
<svg style="left:0;top:200px" width="30" height="30" viewBox="0 200 30 30"><path d="M22.5 209v11.5h-11.5z" fill="#b9b9b9"/></svg>
<div class="t" style="left:62.3px;width:40px;text-align:center;top:208.3px;font-size:12.6px;color:#262626;-webkit-text-stroke:0">A</div>
<div class="a" style="left:137px;top:205px;width:1px;height:18px;background:#b4b4b4"></div>
<div class="t" style="left:194.3px;width:40px;text-align:center;top:208.3px;font-size:12.6px;color:#262626;-webkit-text-stroke:0">B</div>
<div class="a" style="left:290px;top:205px;width:1px;height:18px;background:#b4b4b4"></div>
<div class="t" style="left:347.3px;width:40px;text-align:center;top:208.3px;font-size:12.6px;color:#262626;-webkit-text-stroke:0">C</div>
<div class="a" style="left:443px;top:205px;width:1px;height:18px;background:#b4b4b4"></div>
<div class="t" style="left:498.3px;width:40px;text-align:center;top:208.3px;font-size:12.6px;color:#262626;-webkit-text-stroke:0">D</div>
<div class="a" style="left:592px;top:205px;width:1px;height:18px;background:#b4b4b4"></div>
<div class="t" style="left:647.8px;width:40px;text-align:center;top:208.3px;font-size:12.6px;color:#262626;-webkit-text-stroke:0">E</div>
<div class="a" style="left:742px;top:205px;width:1px;height:18px;background:#b4b4b4"></div>
<div class="t" style="left:754.8px;width:40px;text-align:center;top:208.3px;font-size:12.6px;color:#262626;-webkit-text-stroke:0">F</div>
<div class="a" style="left:806px;top:205px;width:1px;height:18px;background:#b4b4b4"></div>
<div class="t" style="left:818.8px;width:40px;text-align:center;top:208.3px;font-size:12.6px;color:#262626;-webkit-text-stroke:0">G</div>
<div class="a" style="left:870px;top:205px;width:1px;height:18px;background:#b4b4b4"></div>
<div class="t" style="left:882.8px;width:40px;text-align:center;top:208.3px;font-size:12.6px;color:#262626;-webkit-text-stroke:0">H</div>
<div class="a" style="left:934px;top:205px;width:1px;height:18px;background:#b4b4b4"></div>
<div class="t" style="left:946.8px;width:40px;text-align:center;top:208.3px;font-size:12.6px;color:#262626;-webkit-text-stroke:0">I</div>
<div class="a" style="left:998px;top:205px;width:1px;height:18px;background:#b4b4b4"></div>
<div class="t" style="left:1010.8px;width:40px;text-align:center;top:208.3px;font-size:12.6px;color:#262626;-webkit-text-stroke:0">J</div>
<div class="a" style="left:26px;top:205px;width:1px;height:18px;background:#b4b4b4"></div>
<div class="gl" style="left:137px;top:224px;width:1px;height:440px"></div>
<div class="gl" style="left:290px;top:224px;width:1px;height:440px"></div>
<div class="gl" style="left:443px;top:224px;width:1px;height:440px"></div>
<div class="gl" style="left:592px;top:224px;width:1px;height:440px"></div>
<div class="gl" style="left:742px;top:224px;width:1px;height:440px"></div>
<div class="gl" style="left:806px;top:224px;width:1px;height:440px"></div>
<div class="gl" style="left:870px;top:224px;width:1px;height:440px"></div>
<div class="gl" style="left:934px;top:224px;width:1px;height:440px"></div>
<div class="gl" style="left:998px;top:224px;width:1px;height:440px"></div>
<div class="gl" style="left:27px;top:263px;width:1018px;height:1px"></div>
<div class="a" style="left:2px;top:263px;width:24px;height:1px;background:#b4b4b4"></div>
<div class="t" style="left:10.1px;top:248.4px;font-size:12.4px;color:#262626;-webkit-text-stroke:0">1</div>
<div class="gl" style="left:27px;top:283px;width:1018px;height:1px"></div>
<div class="a" style="left:2px;top:283px;width:24px;height:1px;background:#b4b4b4"></div>
<div class="t" style="left:10.1px;top:268.4px;font-size:12.4px;color:#262626;-webkit-text-stroke:0">2</div>
<div class="gl" style="left:27px;top:303px;width:1018px;height:1px"></div>
<div class="a" style="left:2px;top:303px;width:24px;height:1px;background:#b4b4b4"></div>
<div class="t" style="left:10.1px;top:288.4px;font-size:12.4px;color:#262626;-webkit-text-stroke:0">3</div>
<div class="gl" style="left:27px;top:323px;width:1018px;height:1px"></div>
<div class="a" style="left:2px;top:323px;width:24px;height:1px;background:#b4b4b4"></div>
<div class="t" style="left:10.1px;top:308.4px;font-size:12.4px;color:#262626;-webkit-text-stroke:0">4</div>
<div class="gl" style="left:27px;top:343px;width:1018px;height:1px"></div>
<div class="a" style="left:2px;top:343px;width:24px;height:1px;background:#b4b4b4"></div>
<div class="t" style="left:10.1px;top:328.4px;font-size:12.4px;color:#262626;-webkit-text-stroke:0">5</div>
<div class="gl" style="left:27px;top:363px;width:1018px;height:1px"></div>
<div class="a" style="left:2px;top:363px;width:24px;height:1px;background:#b4b4b4"></div>
<div class="t" style="left:10.1px;top:348.4px;font-size:12.4px;color:#262626;-webkit-text-stroke:0">6</div>
<div class="gl" style="left:27px;top:383px;width:1018px;height:1px"></div>
<div class="a" style="left:2px;top:383px;width:24px;height:1px;background:#b4b4b4"></div>
<div class="t" style="left:10.1px;top:368.4px;font-size:12.4px;color:#262626;-webkit-text-stroke:0">7</div>
<div class="gl" style="left:27px;top:403px;width:1018px;height:1px"></div>
<div class="a" style="left:2px;top:403px;width:24px;height:1px;background:#b4b4b4"></div>
<div class="t" style="left:10.1px;top:388.4px;font-size:12.4px;color:#262626;-webkit-text-stroke:0">8</div>
<div class="gl" style="left:27px;top:423px;width:1018px;height:1px"></div>
<div class="a" style="left:2px;top:423px;width:24px;height:1px;background:#b4b4b4"></div>
<div class="t" style="left:10.1px;top:408.4px;font-size:12.4px;color:#262626;-webkit-text-stroke:0">9</div>
<div class="gl" style="left:27px;top:443px;width:1018px;height:1px"></div>
<div class="a" style="left:2px;top:443px;width:24px;height:1px;background:#b4b4b4"></div>
<div class="t" style="left:6.6px;top:428.4px;font-size:12.4px;color:#262626;-webkit-text-stroke:0">10</div>
<div class="gl" style="left:27px;top:463px;width:1018px;height:1px"></div>
<div class="a" style="left:2px;top:463px;width:24px;height:1px;background:#b4b4b4"></div>
<div class="t" style="left:7.1px;top:448.4px;font-size:12.4px;color:#262626;-webkit-text-stroke:0">11</div>
<div class="gl" style="left:27px;top:483px;width:1018px;height:1px"></div>
<div class="a" style="left:2px;top:483px;width:24px;height:1px;background:#b4b4b4"></div>
<div class="t" style="left:6.6px;top:468.4px;font-size:12.4px;color:#262626;-webkit-text-stroke:0">12</div>
<div class="gl" style="left:27px;top:503px;width:1018px;height:1px"></div>
<div class="a" style="left:2px;top:503px;width:24px;height:1px;background:#b4b4b4"></div>
<div class="t" style="left:6.6px;top:488.4px;font-size:12.4px;color:#262626;-webkit-text-stroke:0">13</div>
<div class="gl" style="left:27px;top:523px;width:1018px;height:1px"></div>
<div class="a" style="left:2px;top:523px;width:24px;height:1px;background:#b4b4b4"></div>
<div class="t" style="left:6.6px;top:508.4px;font-size:12.4px;color:#262626;-webkit-text-stroke:0">14</div>
<div class="gl" style="left:27px;top:543px;width:1018px;height:1px"></div>
<div class="a" style="left:2px;top:543px;width:24px;height:1px;background:#b4b4b4"></div>
<div class="t" style="left:6.6px;top:528.4px;font-size:12.4px;color:#262626;-webkit-text-stroke:0">15</div>
<div class="gl" style="left:27px;top:563px;width:1018px;height:1px"></div>
<div class="a" style="left:2px;top:563px;width:24px;height:1px;background:#b4b4b4"></div>
<div class="t" style="left:6.6px;top:548.4px;font-size:12.4px;color:#262626;-webkit-text-stroke:0">16</div>
<div class="gl" style="left:27px;top:583px;width:1018px;height:1px"></div>
<div class="a" style="left:2px;top:583px;width:24px;height:1px;background:#b4b4b4"></div>
<div class="t" style="left:6.6px;top:568.4px;font-size:12.4px;color:#262626;-webkit-text-stroke:0">17</div>
<div class="gl" style="left:27px;top:603px;width:1018px;height:1px"></div>
<div class="a" style="left:2px;top:603px;width:24px;height:1px;background:#b4b4b4"></div>
<div class="t" style="left:6.6px;top:588.4px;font-size:12.4px;color:#262626;-webkit-text-stroke:0">18</div>
<div class="gl" style="left:27px;top:623px;width:1018px;height:1px"></div>
<div class="a" style="left:2px;top:623px;width:24px;height:1px;background:#b4b4b4"></div>
<div class="t" style="left:6.6px;top:608.4px;font-size:12.4px;color:#262626;-webkit-text-stroke:0">19</div>
<div class="gl" style="left:27px;top:643px;width:1018px;height:1px"></div>
<div class="a" style="left:2px;top:643px;width:24px;height:1px;background:#b4b4b4"></div>
<div class="t" style="left:6.6px;top:628.4px;font-size:12.4px;color:#262626;-webkit-text-stroke:0">20</div>
<div class="a" style="left:2px;top:663px;width:24px;height:1px;background:#b4b4b4"></div>
<div class="t" style="left:6.6px;top:648.4px;font-size:12.4px;color:#262626;-webkit-text-stroke:0">21</div>
<div class="a" style="left:2px;top:223px;width:1043px;height:1px;background:#9d9d9d"></div>
<div class="a" style="left:26px;top:224px;width:1px;height:441px;background:#9d9d9d"></div>
<div class="a" style="left:1044px;top:224px;width:1px;height:441px;background:#9d9d9d"></div>
<div class="a" style="left:2px;top:664px;width:1043px;height:1px;background:#9d9d9d"></div>
<div class="a" style="left:27px;top:224px;width:716px;height:39px;background:#6fd044"></div>
<div class="a" style="left:27px;top:264px;width:110px;height:300px;background:#ffc000"></div>
<div class="bl" style="left:137px;top:224px;width:1px;height:340px"></div>
<div class="bl" style="left:290px;top:224px;width:1px;height:340px"></div>
<div class="bl" style="left:443px;top:224px;width:1px;height:340px"></div>
<div class="bl" style="left:592px;top:224px;width:1px;height:340px"></div>
<div class="bl" style="left:742px;top:224px;width:1px;height:340px"></div>
<div class="bl" style="left:27px;top:263px;width:716px;height:1px"></div>
<div class="bl" style="left:27px;top:283px;width:716px;height:1px"></div>
<div class="bl" style="left:27px;top:303px;width:716px;height:1px"></div>
<div class="bl" style="left:27px;top:323px;width:716px;height:1px"></div>
<div class="bl" style="left:27px;top:343px;width:716px;height:1px"></div>
<div class="bl" style="left:27px;top:363px;width:716px;height:1px"></div>
<div class="bl" style="left:27px;top:383px;width:716px;height:1px"></div>
<div class="bl" style="left:27px;top:403px;width:716px;height:1px"></div>
<div class="bl" style="left:27px;top:423px;width:716px;height:1px"></div>
<div class="bl" style="left:27px;top:443px;width:716px;height:1px"></div>
<div class="bl" style="left:27px;top:463px;width:716px;height:1px"></div>
<div class="bl" style="left:27px;top:483px;width:716px;height:1px"></div>
<div class="bl" style="left:27px;top:503px;width:716px;height:1px"></div>
<div class="bl" style="left:27px;top:523px;width:716px;height:1px"></div>
<div class="bl" style="left:27px;top:543px;width:716px;height:1px"></div>
<div class="bl" style="left:27px;top:563px;width:716px;height:1px"></div>
<div class="t " style="left:140.7px;top:227.8px;font-size:13.2px;letter-spacing:0.3px;color:#000;">Продажи по Торговой</div>
<div class="t " style="left:140.7px;top:247.3px;font-size:13.2px;letter-spacing:0.07px;color:#000;">точке 1, тыс. руб.</div>
<div class="t " style="left:293.7px;top:227.8px;font-size:13.2px;letter-spacing:0.3px;color:#000;">Продажи по Торговой</div>
<div class="t " style="left:293.7px;top:247.3px;font-size:13.2px;letter-spacing:0.07px;color:#000;">точке 2, тыс. руб.</div>
<div class="t " style="left:446.7px;top:227.8px;font-size:13.2px;letter-spacing:0.3px;color:#000;">Продажи по Торговой</div>
<div class="t " style="left:446.7px;top:247.3px;font-size:13.2px;letter-spacing:0.07px;color:#000;">точке 3, тыс. руб.</div>
<div class="t " style="left:595.7px;top:227.8px;font-size:13.2px;letter-spacing:0.3px;color:#000;">Продажи по Торговой</div>
<div class="t " style="left:595.7px;top:247.3px;font-size:13.2px;letter-spacing:0.07px;color:#000;">точке 4, тыс. руб.</div>
<div class="t " style="left:71px;top:268.5px;font-size:12.7px;letter-spacing:0.04px;color:#000;">01.06.2019</div>
<div class="t " style="left:250.1px;top:268.5px;font-size:12.7px;letter-spacing:-0.27px;color:#000;">25,223</div>
<div class="t " style="left:403.1px;top:268.5px;font-size:12.7px;letter-spacing:-0.27px;color:#000;">33,224</div>
<div class="t " style="left:552.1px;top:268.5px;font-size:12.7px;letter-spacing:-0.27px;color:#000;">14,557</div>
<div class="t " style="left:702.1px;top:268.5px;font-size:12.7px;letter-spacing:-0.27px;color:#000;">24,334</div>
<div class="t " style="left:71px;top:288.5px;font-size:12.7px;letter-spacing:0.04px;color:#000;">02.06.2019</div>
<div class="t " style="left:250.1px;top:288.5px;font-size:12.7px;letter-spacing:-0.27px;color:#000;">25,475</div>
<div class="t " style="left:403.1px;top:288.5px;font-size:12.7px;letter-spacing:-0.27px;color:#000;">33,722</div>
<div class="t " style="left:552.1px;top:288.5px;font-size:12.7px;letter-spacing:-0.27px;color:#000;">14,673</div>
<div class="t " style="left:702.1px;top:288.5px;font-size:12.7px;letter-spacing:-0.27px;color:#000;">24,456</div>
<div class="t " style="left:71px;top:308.5px;font-size:12.7px;letter-spacing:0.04px;color:#000;">03.06.2019</div>
<div class="t " style="left:256.6px;top:308.5px;font-size:12.7px;letter-spacing:-0.22px;color:#000;">25,73</div>
<div class="t " style="left:403.1px;top:308.5px;font-size:12.7px;letter-spacing:-0.27px;color:#000;">34,228</div>
<div class="t " style="left:552.1px;top:308.5px;font-size:12.7px;letter-spacing:-0.27px;color:#000;">14,791</div>
<div class="t " style="left:702.1px;top:308.5px;font-size:12.7px;letter-spacing:-0.27px;color:#000;">24,578</div>
<div class="t " style="left:71px;top:328.5px;font-size:12.7px;letter-spacing:0.04px;color:#000;">04.06.2019</div>
<div class="t " style="left:250.1px;top:328.5px;font-size:12.7px;letter-spacing:-0.27px;color:#000;">25,987</div>
<div class="t " style="left:403.1px;top:328.5px;font-size:12.7px;letter-spacing:-0.27px;color:#000;">34,742</div>
<div class="t " style="left:552.1px;top:328.5px;font-size:12.7px;letter-spacing:-0.27px;color:#000;">14,909</div>
<div class="t " style="left:702.1px;top:328.5px;font-size:12.7px;letter-spacing:-0.27px;color:#000;">24,701</div>
<div class="t " style="left:71px;top:348.5px;font-size:12.7px;letter-spacing:0.04px;color:#000;">05.06.2019</div>
<div class="t " style="left:250.1px;top:348.5px;font-size:12.7px;letter-spacing:-0.27px;color:#000;">26,247</div>
<div class="t " style="left:403.1px;top:348.5px;font-size:12.7px;letter-spacing:-0.27px;color:#000;">35,263</div>
<div class="t " style="left:552.1px;top:348.5px;font-size:12.7px;letter-spacing:-0.27px;color:#000;">15,028</div>
<div class="t " style="left:702.1px;top:348.5px;font-size:12.7px;letter-spacing:-0.27px;color:#000;">24,824</div>
<div class="t " style="left:71px;top:368.5px;font-size:12.7px;letter-spacing:0.04px;color:#000;">06.06.2019</div>
<div class="t " style="left:256.6px;top:368.5px;font-size:12.7px;letter-spacing:-0.22px;color:#000;">26,51</div>
<div class="t " style="left:403.1px;top:368.5px;font-size:12.7px;letter-spacing:-0.27px;color:#000;">35,792</div>
<div class="t " style="left:552.1px;top:368.5px;font-size:12.7px;letter-spacing:-0.27px;color:#000;">15,149</div>
<div class="t " style="left:702.1px;top:368.5px;font-size:12.7px;letter-spacing:-0.27px;color:#000;">24,948</div>
<div class="t " style="left:71px;top:388.5px;font-size:12.7px;letter-spacing:0.04px;color:#000;">07.06.2019</div>
<div class="t " style="left:250.1px;top:388.5px;font-size:12.7px;letter-spacing:-0.27px;color:#000;">26,775</div>
<div class="t " style="left:403.1px;top:388.5px;font-size:12.7px;letter-spacing:-0.27px;color:#000;">36,329</div>
<div class="t " style="left:558.6px;top:388.5px;font-size:12.7px;letter-spacing:-0.22px;color:#000;">15,27</div>
<div class="t " style="left:702.1px;top:388.5px;font-size:12.7px;letter-spacing:-0.27px;color:#000;">25,073</div>
<div class="t " style="left:71px;top:408.5px;font-size:12.7px;letter-spacing:0.04px;color:#000;">08.06.2019</div>
<div class="t " style="left:250.1px;top:408.5px;font-size:12.7px;letter-spacing:-0.27px;color:#000;">27,042</div>
<div class="t " style="left:403.1px;top:408.5px;font-size:12.7px;letter-spacing:-0.27px;color:#000;">36,873</div>
<div class="t " style="left:552.1px;top:408.5px;font-size:12.7px;letter-spacing:-0.27px;color:#000;">15,392</div>
<div class="t " style="left:702.1px;top:408.5px;font-size:12.7px;letter-spacing:-0.27px;color:#000;">25,199</div>
<div class="t " style="left:71px;top:428.5px;font-size:12.7px;letter-spacing:0.04px;color:#000;">09.06.2019</div>
<div class="t " style="left:250.1px;top:428.5px;font-size:12.7px;letter-spacing:-0.27px;color:#000;">27,313</div>
<div class="t " style="left:403.1px;top:428.5px;font-size:12.7px;letter-spacing:-0.27px;color:#000;">37,427</div>
<div class="t " style="left:552.1px;top:428.5px;font-size:12.7px;letter-spacing:-0.27px;color:#000;">15,515</div>
<div class="t " style="left:702.1px;top:428.5px;font-size:12.7px;letter-spacing:-0.27px;color:#000;">25,325</div>
<div class="t " style="left:71px;top:448.5px;font-size:12.7px;letter-spacing:0.04px;color:#000;">10.06.2019</div>
<div class="t " style="left:250.1px;top:448.5px;font-size:12.7px;letter-spacing:-0.27px;color:#000;">27,586</div>
<div class="t " style="left:403.1px;top:448.5px;font-size:12.7px;letter-spacing:-0.27px;color:#000;">37,988</div>
<div class="t " style="left:552.1px;top:448.5px;font-size:12.7px;letter-spacing:-0.27px;color:#000;">15,639</div>
<div class="t " style="left:702.1px;top:448.5px;font-size:12.7px;letter-spacing:-0.27px;color:#000;">25,451</div>
<div class="t " style="left:71px;top:468.5px;font-size:12.7px;letter-spacing:0.14px;color:#000;">11.06.2019</div>
<div class="t " style="left:250.1px;top:468.5px;font-size:12.7px;letter-spacing:-0.27px;color:#000;">27,862</div>
<div class="t " style="left:403.1px;top:468.5px;font-size:12.7px;letter-spacing:-0.27px;color:#000;">38,558</div>
<div class="t " style="left:552.1px;top:468.5px;font-size:12.7px;letter-spacing:-0.27px;color:#000;">15,764</div>
<div class="t " style="left:702.1px;top:468.5px;font-size:12.7px;letter-spacing:-0.27px;color:#000;">25,578</div>
<div class="t " style="left:71px;top:488.5px;font-size:12.7px;letter-spacing:0.04px;color:#000;">12.06.2019</div>
<div class="t " style="left:250.1px;top:488.5px;font-size:12.7px;letter-spacing:-0.27px;color:#000;">28,141</div>
<div class="t " style="left:403.1px;top:488.5px;font-size:12.7px;letter-spacing:-0.27px;color:#000;">39,136</div>
<div class="t " style="left:552.1px;top:488.5px;font-size:12.7px;letter-spacing:-0.27px;color:#000;">15,891</div>
<div class="t " style="left:702.1px;top:488.5px;font-size:12.7px;letter-spacing:-0.27px;color:#000;">25,706</div>
<div class="t " style="left:71px;top:508.5px;font-size:12.7px;letter-spacing:0.04px;color:#000;">13.06.2019</div>
<div class="t " style="left:250.1px;top:508.5px;font-size:12.7px;letter-spacing:-0.27px;color:#000;">28,422</div>
<div class="t " style="left:403.1px;top:508.5px;font-size:12.7px;letter-spacing:-0.27px;color:#000;">39,723</div>
<div class="t " style="left:552.1px;top:508.5px;font-size:12.7px;letter-spacing:-0.27px;color:#000;">16,018</div>
<div class="t " style="left:702.1px;top:508.5px;font-size:12.7px;letter-spacing:-0.27px;color:#000;">25,835</div>
<div class="t " style="left:71px;top:528.5px;font-size:12.7px;letter-spacing:0.04px;color:#000;">14.06.2019</div>
<div class="t " style="left:250.1px;top:528.5px;font-size:12.7px;letter-spacing:-0.27px;color:#000;">28,706</div>
<div class="t " style="left:403.1px;top:528.5px;font-size:12.7px;letter-spacing:-0.27px;color:#000;">40,319</div>
<div class="t " style="left:552.1px;top:528.5px;font-size:12.7px;letter-spacing:-0.27px;color:#000;">16,146</div>
<div class="t " style="left:702.1px;top:528.5px;font-size:12.7px;letter-spacing:-0.27px;color:#000;">25,964</div>
<div class="t " style="left:71px;top:548.5px;font-size:12.7px;letter-spacing:0.04px;color:#000;">15.06.2019</div>
<div class="t " style="left:250.1px;top:548.5px;font-size:12.7px;letter-spacing:-0.27px;color:#000;">28,993</div>
<div class="t " style="left:403.1px;top:548.5px;font-size:12.7px;letter-spacing:-0.27px;color:#000;">40,924</div>
<div class="t " style="left:552.1px;top:548.5px;font-size:12.7px;letter-spacing:-0.27px;color:#000;">16,275</div>
<div class="t " style="left:702.1px;top:548.5px;font-size:12.7px;letter-spacing:-0.27px;color:#000;">26,094</div>
<div class="a" style="left:294px;top:299px;width:482px;height:290px;background:#fff"></div>
<div class="a" style="left:295px;top:300px;width:480px;height:288px;border:1px solid #8f9694"></div>
<div class="t " style="left:416.8px;top:314px;font-size:17.2px;letter-spacing:0.02px;color:#595959;">Продажи по торговым точкам</div>
<svg style="left:0;top:0" width="1067" height="716" viewBox="0 0 1067 716" font-family="Liberation Sans, sans-serif"><rect x="411.5" y="307.5" width="246" height="27" fill="none" stroke="#8a8a8a" stroke-width="1" stroke-dasharray="2 2"/><circle cx="411.5" cy="307.5" r="2.8" fill="#fff" stroke="#2fa9e6" stroke-width="1.5"/><circle cx="657.5" cy="307.5" r="2.8" fill="#fff" stroke="#2fa9e6" stroke-width="1.5"/><circle cx="411.5" cy="334.5" r="2.8" fill="#fff" stroke="#2fa9e6" stroke-width="1.5"/><circle cx="657.5" cy="334.5" r="2.8" fill="#fff" stroke="#2fa9e6" stroke-width="1.5"/><path d="M332 410.5H760" stroke="#d9d9d9" stroke-width="1"/><path d="M332 395.5H760" stroke="#d9d9d9" stroke-width="1"/><path d="M332 379.5H760" stroke="#d9d9d9" stroke-width="1"/><path d="M332 364.5H760" stroke="#d9d9d9" stroke-width="1"/><path d="M332 348.5H760" stroke="#d9d9d9" stroke-width="1"/><path d="M332 426.5H760" stroke="#cfcfcf" stroke-width="1"/><path d="M332.5 426v4" stroke="#cfcfcf" stroke-width="1"/><path d="M360.5 426v4" stroke="#cfcfcf" stroke-width="1"/><path d="M389.5 426v4" stroke="#cfcfcf" stroke-width="1"/><path d="M417.5 426v4" stroke="#cfcfcf" stroke-width="1"/><path d="M446.5 426v4" stroke="#cfcfcf" stroke-width="1"/><path d="M474.5 426v4" stroke="#cfcfcf" stroke-width="1"/><path d="M503.5 426v4" stroke="#cfcfcf" stroke-width="1"/><path d="M531.5 426v4" stroke="#cfcfcf" stroke-width="1"/><path d="M560.5 426v4" stroke="#cfcfcf" stroke-width="1"/><path d="M588.5 426v4" stroke="#cfcfcf" stroke-width="1"/><path d="M617.5 426v4" stroke="#cfcfcf" stroke-width="1"/><path d="M645.5 426v4" stroke="#cfcfcf" stroke-width="1"/><path d="M674.5 426v4" stroke="#cfcfcf" stroke-width="1"/><path d="M702.5 426v4" stroke="#cfcfcf" stroke-width="1"/><path d="M731.5 426v4" stroke="#cfcfcf" stroke-width="1"/><path d="M759.5 426v4" stroke="#cfcfcf" stroke-width="1"/><text x="320.8" y="429.8" font-size="11" text-anchor="end" fill="#595959" stroke="#595959" stroke-width=".25">0</text><text x="320.8" y="413.8" font-size="11" text-anchor="end" fill="#595959" stroke="#595959" stroke-width=".25">10</text><text x="320.8" y="398.8" font-size="11" text-anchor="end" fill="#595959" stroke="#595959" stroke-width=".25">20</text><text x="320.8" y="382.8" font-size="11" text-anchor="end" fill="#595959" stroke="#595959" stroke-width=".25">30</text><text x="320.8" y="367.8" font-size="11" text-anchor="end" fill="#595959" stroke="#595959" stroke-width=".25">40</text><text x="320.8" y="351.8" font-size="11" text-anchor="end" fill="#595959" stroke="#595959" stroke-width=".25">50</text><rect x="337" y="387" width="4" height="39" fill="#1068c0"/><rect x="342" y="375" width="4" height="51" fill="#fa7d1c"/><rect x="347" y="404" width="4" height="22" fill="#a0a5a3"/><rect x="352" y="388" width="4" height="38" fill="#ffb900"/><rect x="365" y="387" width="4" height="39" fill="#1068c0"/><rect x="370" y="374" width="4" height="52" fill="#fa7d1c"/><rect x="375" y="403" width="4" height="23" fill="#a0a5a3"/><rect x="380" y="388" width="4" height="38" fill="#ffb900"/><rect x="394" y="386" width="4" height="40" fill="#1068c0"/><rect x="399" y="373" width="4" height="53" fill="#fa7d1c"/><rect x="404" y="403" width="4" height="23" fill="#a0a5a3"/><rect x="409" y="388" width="4" height="38" fill="#ffb900"/><rect x="422" y="386" width="4" height="40" fill="#1068c0"/><rect x="427" y="372" width="4" height="54" fill="#fa7d1c"/><rect x="432" y="403" width="4" height="23" fill="#a0a5a3"/><rect x="437" y="388" width="4" height="38" fill="#ffb900"/><rect x="451" y="385" width="4" height="41" fill="#1068c0"/><rect x="456" y="371" width="4" height="55" fill="#fa7d1c"/><rect x="461" y="403" width="4" height="23" fill="#a0a5a3"/><rect x="466" y="388" width="4" height="38" fill="#ffb900"/><rect x="479" y="385" width="4" height="41" fill="#1068c0"/><rect x="484" y="371" width="4" height="55" fill="#fa7d1c"/><rect x="489" y="403" width="4" height="23" fill="#a0a5a3"/><rect x="494" y="387" width="4" height="39" fill="#ffb900"/><rect x="508" y="385" width="4" height="41" fill="#1068c0"/><rect x="513" y="370" width="4" height="56" fill="#fa7d1c"/><rect x="518" y="402" width="4" height="24" fill="#a0a5a3"/><rect x="523" y="387" width="4" height="39" fill="#ffb900"/><rect x="536" y="384" width="4" height="42" fill="#1068c0"/><rect x="541" y="369" width="4" height="57" fill="#fa7d1c"/><rect x="546" y="402" width="4" height="24" fill="#a0a5a3"/><rect x="551" y="387" width="4" height="39" fill="#ffb900"/><rect x="565" y="384" width="4" height="42" fill="#1068c0"/><rect x="570" y="368" width="4" height="58" fill="#fa7d1c"/><rect x="575" y="402" width="4" height="24" fill="#a0a5a3"/><rect x="580" y="387" width="4" height="39" fill="#ffb900"/><rect x="593" y="383" width="4" height="43" fill="#1068c0"/><rect x="598" y="367" width="4" height="59" fill="#fa7d1c"/><rect x="603" y="402" width="4" height="24" fill="#a0a5a3"/><rect x="608" y="387" width="4" height="39" fill="#ffb900"/><rect x="622" y="383" width="4" height="43" fill="#1068c0"/><rect x="627" y="366" width="4" height="60" fill="#fa7d1c"/><rect x="632" y="402" width="4" height="24" fill="#a0a5a3"/><rect x="637" y="386" width="4" height="40" fill="#ffb900"/><rect x="650" y="382" width="4" height="44" fill="#1068c0"/><rect x="655" y="365" width="4" height="61" fill="#fa7d1c"/><rect x="660" y="401" width="4" height="25" fill="#a0a5a3"/><rect x="665" y="386" width="4" height="40" fill="#ffb900"/><rect x="679" y="382" width="4" height="44" fill="#1068c0"/><rect x="684" y="364" width="4" height="62" fill="#fa7d1c"/><rect x="689" y="401" width="4" height="25" fill="#a0a5a3"/><rect x="694" y="386" width="4" height="40" fill="#ffb900"/><rect x="707" y="382" width="4" height="44" fill="#1068c0"/><rect x="712" y="363" width="4" height="63" fill="#fa7d1c"/><rect x="717" y="401" width="4" height="25" fill="#a0a5a3"/><rect x="722" y="386" width="4" height="40" fill="#ffb900"/><rect x="736" y="381" width="4" height="45" fill="#1068c0"/><rect x="741" y="363" width="4" height="63" fill="#fa7d1c"/><rect x="746" y="401" width="4" height="25" fill="#a0a5a3"/><rect x="751" y="386" width="4" height="40" fill="#ffb900"/><text transform="translate(349.4 441) rotate(-45)" font-size="11.2" text-anchor="end" fill="#595959" stroke="#595959" stroke-width=".3" textLength="55.5" lengthAdjust="spacing">01.06.2019</text><text transform="translate(377.9 441) rotate(-45)" font-size="11.2" text-anchor="end" fill="#595959" stroke="#595959" stroke-width=".3" textLength="55.5" lengthAdjust="spacing">02.06.2019</text><text transform="translate(406.4 441) rotate(-45)" font-size="11.2" text-anchor="end" fill="#595959" stroke="#595959" stroke-width=".3" textLength="55.5" lengthAdjust="spacing">03.06.2019</text><text transform="translate(434.9 441) rotate(-45)" font-size="11.2" text-anchor="end" fill="#595959" stroke="#595959" stroke-width=".3" textLength="55.5" lengthAdjust="spacing">04.06.2019</text><text transform="translate(463.4 441) rotate(-45)" font-size="11.2" text-anchor="end" fill="#595959" stroke="#595959" stroke-width=".3" textLength="55.5" lengthAdjust="spacing">05.06.2019</text><text transform="translate(491.9 441) rotate(-45)" font-size="11.2" text-anchor="end" fill="#595959" stroke="#595959" stroke-width=".3" textLength="55.5" lengthAdjust="spacing">06.06.2019</text><text transform="translate(520.5 441) rotate(-45)" font-size="11.2" text-anchor="end" fill="#595959" stroke="#595959" stroke-width=".3" textLength="55.5" lengthAdjust="spacing">07.06.2019</text><text transform="translate(549 441) rotate(-45)" font-size="11.2" text-anchor="end" fill="#595959" stroke="#595959" stroke-width=".3" textLength="55.5" lengthAdjust="spacing">08.06.2019</text><text transform="translate(577.5 441) rotate(-45)" font-size="11.2" text-anchor="end" fill="#595959" stroke="#595959" stroke-width=".3" textLength="55.5" lengthAdjust="spacing">09.06.2019</text><text transform="translate(606 441) rotate(-45)" font-size="11.2" text-anchor="end" fill="#595959" stroke="#595959" stroke-width=".3" textLength="55.5" lengthAdjust="spacing">10.06.2019</text><text transform="translate(634.5 441) rotate(-45)" font-size="11.2" text-anchor="end" fill="#595959" stroke="#595959" stroke-width=".3" textLength="55.5" lengthAdjust="spacing">11.06.2019</text><text transform="translate(663 441) rotate(-45)" font-size="11.2" text-anchor="end" fill="#595959" stroke="#595959" stroke-width=".3" textLength="55.5" lengthAdjust="spacing">12.06.2019</text><text transform="translate(691.5 441) rotate(-45)" font-size="11.2" text-anchor="end" fill="#595959" stroke="#595959" stroke-width=".3" textLength="55.5" lengthAdjust="spacing">13.06.2019</text><text transform="translate(720 441) rotate(-45)" font-size="11.2" text-anchor="end" fill="#595959" stroke="#595959" stroke-width=".3" textLength="55.5" lengthAdjust="spacing">14.06.2019</text><text transform="translate(748.5 441) rotate(-45)" font-size="11.2" text-anchor="end" fill="#595959" stroke="#595959" stroke-width=".3" textLength="55.5" lengthAdjust="spacing">15.06.2019</text><rect x="431" y="499.2" width="6" height="6.5" fill="#1068c0"/><rect x="431" y="521.6" width="6" height="6.5" fill="#fa7d1c"/><rect x="431" y="544" width="6" height="6.5" fill="#a0a5a3"/><rect x="431" y="566.4" width="6" height="6.5" fill="#ffb900"/></svg>
<div class="t " style="left:440.9px;top:496.7px;font-size:11.2px;letter-spacing:-0.09px;color:#595959;">Продажи по Торговой точке 1, тыс. руб.</div>
<div class="t " style="left:440.9px;top:519px;font-size:11.2px;letter-spacing:-0.09px;color:#595959;">Продажи по Торговой точке 2, тыс. руб.</div>
<div class="t " style="left:440.9px;top:541.3px;font-size:11.2px;letter-spacing:-0.09px;color:#595959;">Продажи по Торговой точке 3, тыс. руб.</div>
<div class="t " style="left:440.9px;top:563.6px;font-size:11.2px;letter-spacing:-0.09px;color:#595959;">Продажи по Торговой точке 4, тыс. руб.</div>
<svg style="left:0;top:0" width="1067" height="716" viewBox="0 0 1067 716" fill="none"><circle cx="295.5" cy="300.4" r="4.7" fill="#fff" stroke="#8f9694" stroke-width="1.7"/><circle cx="535" cy="300.4" r="4.7" fill="#fff" stroke="#8f9694" stroke-width="1.7"/><circle cx="774.4" cy="300.4" r="4.7" fill="#fff" stroke="#8f9694" stroke-width="1.7"/><circle cx="295.4" cy="443.5" r="4.7" fill="#fff" stroke="#8f9694" stroke-width="1.7"/><circle cx="774.4" cy="443.5" r="4.7" fill="#fff" stroke="#8f9694" stroke-width="1.7"/><circle cx="295.6" cy="587.4" r="4.7" fill="#fff" stroke="#8f9694" stroke-width="1.7"/><circle cx="534.5" cy="587.4" r="4.7" fill="#fff" stroke="#8f9694" stroke-width="1.7"/><circle cx="774.4" cy="587.4" r="4.7" fill="#fff" stroke="#8f9694" stroke-width="1.7"/><rect x="286" y="289.1" width="22.3" height="22.8" rx="3.5" stroke="#fe0000" stroke-width="3"/><rect x="524.4" y="289.1" width="21.7" height="22.8" rx="3.5" stroke="#fe0000" stroke-width="3"/><rect x="761.6" y="289.5" width="23" height="23.9" rx="3.5" stroke="#fe0000" stroke-width="3"/><rect x="284.5" y="431.5" width="23" height="23.9" rx="3.5" stroke="#fe0000" stroke-width="3"/><rect x="763.5" y="431.5" width="23" height="23.9" rx="3.5" stroke="#fe0000" stroke-width="3"/><rect x="282.4" y="577" width="22.3" height="22.8" rx="3.5" stroke="#fe0000" stroke-width="3"/><rect x="522.4" y="577" width="22.5" height="22.8" rx="3.5" stroke="#fe0000" stroke-width="3"/><rect x="763.5" y="574.5" width="23" height="24" rx="3.5" stroke="#fe0000" stroke-width="3"/></svg>
<div class="a" style="left:1045px;top:204px;width:21px;height:461px;background:#e8e8e8"></div>
<div class="a" style="left:1px;top:665px;width:1065px;height:28px;background:#e8e8e8"></div>
<div class="a" style="left:1px;top:693px;width:1065px;height:22px;background:#f3f3f3;border-top:1px solid #dcdcdc"></div>
<div class="a" style="left:0;top:65px;width:1px;height:651px;background:#05733f"></div>
<div class="a" style="left:1066px;top:65px;width:1px;height:651px;background:#05733f"></div>
<div class="a" style="left:0;top:715px;width:1067px;height:1px;background:#05733f"></div>
<div class="a" style="left:1048px;top:630px;width:15px;height:21px;background:#dcdcdc"></div>
<div class="a" style="left:990px;top:672px;width:40px;height:15px;background:#dcdcdc"></div>
<div class="box" style="left:1048px;top:206px;width:15px;height:15px;border-color:#c4c4c4"></div>
<div class="box" style="left:1048px;top:221px;width:15px;height:409px;border-color:#b8b8b8;background:#fff"></div>
<div class="box" style="left:1048px;top:651px;width:15px;height:14px;border-color:#c4c4c4"></div>
<div class="box" style="left:657px;top:672px;width:15px;height:15px;border-color:#c4c4c4"></div>
<div class="box" style="left:672px;top:672px;width:318px;height:15px;border-color:#b8b8b8;background:#fff"></div>
<div class="box" style="left:1030px;top:672px;width:15px;height:15px;border-color:#c4c4c4"></div>
<div class="a" style="left:101px;top:664px;width:107px;height:26px;background:#fff;border-left:1px solid #b4b4b4;border-right:1px solid #b4b4b4;border-bottom:2px solid #05733f"></div>
<div class="t " style="left:113.6px;top:671.3px;font-size:13.2px;letter-spacing:-0.26px;color:#05733f;font-weight:bold;">microexcel.ru</div>
<svg style="left:0;top:0" width="1067" height="716" viewBox="0 0 1067 716" fill="none">
<path d="M1052 215.5h7l-3.5-4z" fill="#777"/><path d="M1052 656.5h7l-3.5 4z" fill="#666"/>
<path d="M666.5 676v7l-4-3.5z" fill="#555"/><path d="M1036 676v7l4-3.5z" fill="#666"/>
<path d="M32 675v7l-3.5-3.5z" fill="#c4c4c4"/><path d="M57 675v7l3.5-3.5z" fill="#c4c4c4"/>
<circle cx="248.7" cy="678.7" r="7.3" stroke="#6a6a6a" stroke-width="1.1"/><path d="M244.5 678.7h8.4M248.7 674.5v8.4" stroke="#6a6a6a" stroke-width="1.3"/>
<g fill="#a8a8a8"><rect x="640" y="674" width="2" height="2"/><rect x="640" y="678" width="2" height="2"/><rect x="640" y="682" width="2" height="2"/></g>
<rect x="10" y="700" width="11" height="9" stroke="#555" stroke-width="1"/><path d="M10 703h11M13.5 703v6M17.5 703v6M10 706h11" stroke="#555" stroke-width=".900"/><circle cx="12" cy="700" r="2.6" fill="#555"/>
<rect x="766" y="694" width="38" height="21" fill="#cdcdcd"/>
<rect x="778.75" y="697.75" width="12.5" height="12" stroke="#666" stroke-width="1.4"/><path d="M783 697.5v12M787 697.5v12M778.5 701.7h13M778.5 705.7h13" stroke="#666" stroke-width="1.3"/>
<rect x="816.6" y="697.6" width="13" height="12" stroke="#6a6a6a" stroke-width="1.2"/><rect x="819.5" y="700.5" width="7" height="6.5" stroke="#6a6a6a" stroke-width="1"/><path d="M821 702.5h4M821 704.5h4" stroke="#6a6a6a" stroke-width=".800"/>
<rect x="854.6" y="697.6" width="13" height="12" stroke="#6a6a6a" stroke-width="1.2"/><path d="M858.5 697.5v5.5h5.5v-5.5" stroke="#6a6a6a" stroke-width="1"/>
<path d="M885 704h6" stroke="#555" stroke-width="1.6"/><path d="M895 704.5h100" stroke="#a0a0a0" stroke-width="1"/><rect x="943" y="698" width="5" height="11" fill="#5a5a5a"/>
<path d="M998.5 704h7M1002 700.5v7" stroke="#555" stroke-width="1.6"/>
</svg>
<div class="t " style="left:1017.4px;top:698.2px;font-size:11.6px;letter-spacing:-0.76px;color:#333;">100 %</div>
</body></html>
